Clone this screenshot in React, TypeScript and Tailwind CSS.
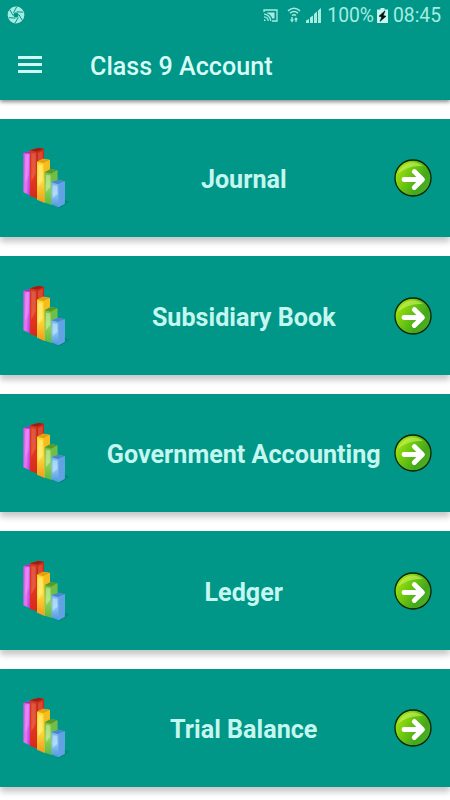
import { ReactNode } from "react";

const chapters = [
  "Journal",
  "Subsidiary Book",
  "Government Accounting",
  "Ledger",
  "Trial Balance",
];

function BarsIcon() {
  return (
    <svg viewBox="36 36 150 186" className="w-[50px] h-[62px] shrink-0">
      <defs>
        <linearGradient id="purple" x1="0" y1="0" x2="1" y2="0.3">
          <stop offset="0" stopColor="#d050e4" />
          <stop offset="0.5" stopColor="#e777f2" />
          <stop offset="1" stopColor="#b030d8" />
        </linearGradient>
        <linearGradient id="red" x1="0" y1="0" x2="0" y2="1">
          <stop offset="0" stopColor="#cc3a22" />
          <stop offset="0.55" stopColor="#e2391f" />
          <stop offset="1" stopColor="#d8281c" />
        </linearGradient>
        <linearGradient id="yellow" x1="0" y1="0" x2="0" y2="1">
          <stop offset="0" stopColor="#fbd21c" />
          <stop offset="0.5" stopColor="#fce03c" />
          <stop offset="1" stopColor="#f59a1c" />
        </linearGradient>
        <linearGradient id="green" x1="0" y1="0" x2="0" y2="1">
          <stop offset="0" stopColor="#6dbb3c" />
          <stop offset="0.5" stopColor="#93d560" />
          <stop offset="1" stopColor="#5cbb3c" />
        </linearGradient>
        <linearGradient id="blue" x1="0" y1="0" x2="0" y2="1">
          <stop offset="0" stopColor="#6fb2ea" />
          <stop offset="0.5" stopColor="#8fc8f4" />
          <stop offset="1" stopColor="#4f96de" />
        </linearGradient>
      </defs>
      <path d="M142 218L164 194L178 200L150 218Z" fill="#067a6e" opacity="0.6" />
      <path d="M40 54L58 48L66 50V184L40 172Z" fill="url(#purple)" />
      <path d="M40 54L58 48L66 50L60 56Z" fill="#9c34b0" />
      <path d="M45 60L57 58V120L45 145Z" fill="#f6b0fa" opacity="0.3" />
      <path d="M60 46L86 38L102 42V180L80 190L60 183Z" fill="url(#red)" />
      <path d="M60 46L86 38L102 42L80 50Z" fill="#9e1d12" />
      <path d="M80 50L102 42V180L80 190Z" fill="#c92a18" />
      <path d="M84 54L98 48V76L84 80Z" fill="#e0604a" opacity="0.6" />
      <path d="M64 54L77 56V115L64 140Z" fill="#f7a08c" opacity="0.3" />
      <path d="M81 80L100 71L120 75V195L102 203L81 194Z" fill="url(#yellow)" />
      <path d="M81 80L100 71L120 75L101 85Z" fill="#e0a010" />
      <path d="M101 85L120 75V195L102 203Z" fill="#f6bb1e" />
      <path d="M85 88L98 90V135L85 155Z" fill="#fff6a8" opacity="0.5" />
      <path d="M104 112L122 102L142 106V200L123 209L104 203Z" fill="url(#green)" />
      <path d="M104 112L122 102L142 106L124 116Z" fill="#57992a" />
      <path d="M124 116L142 106V200L124 209Z" fill="#6fbe48" />
      <path d="M108 119L121 121V155L108 172Z" fill="#d8f7b4" opacity="0.5" />
      <path d="M124 142L144 134L164 139V206L145 217L124 208Z" fill="url(#blue)" />
      <path d="M124 142L144 134L164 139L145 148Z" fill="#4a86c8" />
      <path d="M145 148L164 139V206L145 217Z" fill="#62a2e4" />
      <path d="M128 150L142 153V176L128 190Z" fill="#d6eefc" opacity="0.5" />
    </svg>
  );
}

function ArrowIcon() {
  return (
    <svg viewBox="0 0 38 38" className="size-[38px] shrink-0">
      <defs>
        <linearGradient id="ball" x1="0.05" y1="0.2" x2="0.95" y2="0.75">
          <stop offset="0" stopColor="#a4e410" />
          <stop offset="0.4" stopColor="#6cc610" />
          <stop offset="0.75" stopColor="#45a81c" />
          <stop offset="1" stopColor="#4cae24" />
        </linearGradient>
      </defs>
      <circle cx="19" cy="19" r="18" fill="url(#ball)" stroke="#0c2408" strokeWidth="1.3" />
      <path d="M4 15A15.5 15.5 0 0 1 29 7Q14 6 4 15Z" fill="#d2f56a" opacity="0.55" />
      <path
        d="M10 20.5H28M20.3 12.6L28.4 20.5L20.3 28.5"
        fill="none"
        stroke="#fff"
        strokeWidth="4.9"
        strokeLinecap="round"
        strokeLinejoin="round"
      />
    </svg>
  );
}

function StatusBar() {
  return (
    <div className="flex h-[31px] items-center pl-[7px] pr-[9px] text-[#a6ece1]">
      <svg viewBox="0 0 18 18" className="size-[18px] -mt-px">
        <circle cx="9" cy="9" r="8.4" fill="#a6ece1" />
        <path
          d="M6.5 6.8L9.6 1M9.8 5.8L16.2 6.2M12 8.6L15.3 14.5M11.4 11.4L8 17M8.2 12.2L1.8 11.6M6 9.4L2.8 3.6"
          stroke="#009688"
          strokeWidth="1"
        />
        <path d="M7.6 6.6H10.4L11.8 9L10.4 11.4H7.6L6.2 9Z" fill="#009688" />
      </svg>
      <div className="ml-auto flex items-center">
        <svg viewBox="0 0 15 13" className="mr-[9px] h-[13px] w-[15px]" fill="none" stroke="currentColor">
          <path d="M1 3V1H14V12H9" strokeWidth="1.3" />
          <path d="M1 5.2A7 7 0 0 1 7.8 12M1 7.8A4.3 4.3 0 0 1 5.2 12" strokeWidth="1.3" />
          <path d="M4 3.5H11.5V9.5H9.3A8 8 0 0 0 4 4.3Z" fill="currentColor" stroke="none" />
          <path d="M1 10.2A2 2 0 0 1 2.8 12H1Z" fill="currentColor" stroke="none" />
        </svg>
        <svg viewBox="0 0 14 16" className="mr-[5px] h-4 w-3.5" fill="none" stroke="currentColor">
          <path d="M1 3.8Q7-1.2 13 3.8M3 6.2Q7 3 11 6.2M5 8.5Q7 7 9 8.5" strokeWidth="1.5" />
          <path d="M5 10V13.5M9 15V11.5" strokeWidth="1.4" />
          <path d="M3 12.5H7L5 15.5ZM7 12.7H11L9 10Z" fill="currentColor" stroke="none" />
        </svg>
        <svg viewBox="0 0 15 15" className="mr-[6px] size-[15px]" fill="currentColor">
          <path d="M0 15V12.5L3 11V15ZM4 15V9.5L7 7.5V15ZM8 15V6L11 3.5V15ZM12 15V2.5L15 0V15Z" />
        </svg>
        <span className="pt-px text-[19.3px] leading-none">100%</span>
        <svg viewBox="0 0 11 15" className="ml-[3px] mr-[5px] h-[15px] w-[11px]">
          <path d="M3.5 0H7.5V1.5H11V15H0V1.5H3.5Z" fill="#c4f7ef" />
          <path d="M8 2.8L2 8.2L4.8 9L3 13.4L9 8.2L6.2 7.5Z" fill="#04120f" stroke="#04120f" strokeWidth="0.6" />
        </svg>
        <span className="pt-px text-[19.3px] leading-none">08:45</span>
      </div>
    </div>
  );
}

function Bar({ children }: { children: ReactNode }) {
  return (
    <div className="flex h-[118.5px] items-center bg-[#009688] pl-[22px] pr-[18.5px] shadow-[0_5px_6px_rgba(0,0,0,0.22)]">
      {children}
    </div>
  );
}

export default function App() {
  return (
    <div className="h-[800px] w-[450px] overflow-hidden bg-white font-[Roboto,sans-serif]">
      <header className="h-[100px] bg-[#009688] shadow-[0_2px_4px_rgba(0,0,0,0.45)]">
        <StatusBar />
        <div className="flex h-[69px] items-center pl-[18px]">
          <button className="-mt-[2px] flex w-6 flex-col gap-[4.5px]" aria-label="Menu">
            <span className="h-[2.5px] bg-[#cffaf3]" />
            <span className="h-[2.5px] bg-[#cffaf3]" />
            <span className="h-[2.5px] bg-[#cffaf3]" />
          </button>
          <h1 className="ml-12 pt-[2px] text-[25.15px] font-medium text-[#d8fcf6]">Class 9 Account</h1>
        </div>
      </header>
      <main className="flex flex-col gap-[19px] pt-[18.75px]">
        {chapters.map((chapter) => (
          <Bar key={chapter}>
            <BarsIcon />
            <h2 className="flex-1 whitespace-nowrap pl-[22px] pt-[4px] text-center text-[25.15px] font-bold text-[#c4f7ef]">
              {chapter}
            </h2>
            <ArrowIcon />
          </Bar>
        ))}
      </main>
    </div>
  );
}
